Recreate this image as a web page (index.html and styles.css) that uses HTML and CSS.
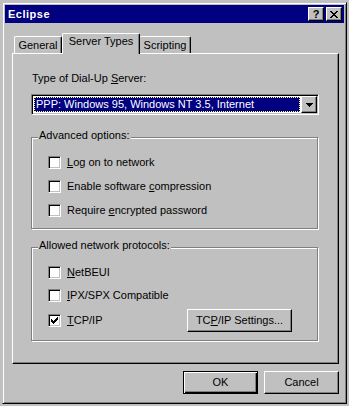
FILE: index.html
```html
<!DOCTYPE html>
<html>
    <head>
        <title>Eclipse</title>
        <link rel="stylesheet" href="styles.css">
    </head>
    <body>
        <div class="window">
            <div class="titlebar">
                <span class="title">Eclipse</span>
                <div class="caption-btns">
                    <span class="cap-btn cap-help">?</span>
                    <span class="cap-btn">
                        <svg width="8" height="7" viewBox="0 0 8 7" shape-rendering="crispEdges"><path d="M0 0h2v1H0zM6 0h2v1H6zM1 1h2v1H1zM5 1h2v1H5zM2 2h4v1H2zM3 3h2v1H3zM2 4h4v1H2zM1 5h2v1H1zM5 5h2v1H5zM0 6h2v1H0zM6 6h2v1H6z" fill="#000"/></svg>
                    </span>
                </div>
            </div>

            <div class="client">
                <div class="tabs">
                    <div class="tab tab-general">General</div>
                    <div class="tab tab-active">Server Types</div>
                    <div class="tab tab-scripting">Scripting</div>
                </div>

                <div class="panel">
                    <div class="field-label">Type of Dial-Up <u>S</u>erver:</div>
                    <div class="combo">
                        <div class="combo-value"><span class="combo-sel">PPP: Windows 95, Windows NT 3.5, Internet</span></div>
                        <div class="combo-btn">
                            <svg width="7" height="4" viewBox="0 0 7 4" shape-rendering="crispEdges"><path d="M0 0h7v1H0zM1 1h5v1H1zM2 2h3v1H2zM3 3h1v1H3z" fill="#000"/></svg>
                        </div>
                    </div>

                    <fieldset class="group group-adv">
                        <legend>Advanced options:</legend>
                        <div class="check-row"><span class="checkbox"></span><span class="check-text"><u>L</u>og on to network</span></div>
                        <div class="check-row"><span class="checkbox"></span><span class="check-text">Enable software <u>c</u>ompression</span></div>
                        <div class="check-row"><span class="checkbox"></span><span class="check-text">Require <u>e</u>ncrypted password</span></div>
                    </fieldset>

                    <fieldset class="group group-proto">
                        <legend>Allowed network protocols:</legend>
                        <div class="check-row"><span class="checkbox"></span><span class="check-text"><u>N</u>etBEUI</span></div>
                        <div class="check-row"><span class="checkbox"></span><span class="check-text"><u>I</u>PX/SPX Compatible</span></div>
                        <div class="check-row row-tcp">
                            <span class="checkbox">
                                <svg width="7" height="7" viewBox="0 0 7 7" shape-rendering="crispEdges"><path d="M6 0h1v1H6zM5 1h2v1H5zM0 2h1v1H0zM4 2h3v1H4zM0 3h2v1H0zM3 3h3v1H3zM0 4h5v1H0zM1 5h3v1H1zM2 6h1v1H2z" fill="#000"/></svg>
                            </span>
                            <span class="check-text"><u>T</u>CP/IP</span>
                            <button class="btn btn-settings">TC<u>P</u>/IP Settings...</button>
                        </div>
                    </fieldset>
                </div>

                <div class="buttons">
                    <button class="btn btn-default">OK</button>
                    <button class="btn">Cancel</button>
                </div>
            </div>
        </div>
    </body>
</html>
```

FILE: styles.css
```css
body{
    margin:0;
    background-color:#c0c0c0;
    font-family:"Liberation Sans", Arial, sans-serif;
    font-size:11px;
    line-height:13px;
    color:#000;
}

.window{
    box-sizing:border-box;
    width:345px;
    height:402px;
    margin:2px 0 0 2px;
    padding:2px;
    border:1px solid;
    border-color:#c0c0c0 #000 #000 #c0c0c0;
    box-shadow:inset 1px 1px #fff, inset -1px -1px #808080;
    background-color:#c0c0c0;
}

.titlebar{
    height:18px;
    display:flex;
    align-items:center;
    justify-content:space-between;
    background-color:#000080;
    color:#fff;
}

.title{
    font-weight:bold;
    padding-left:3px;
    letter-spacing:0.5px;
}

.caption-btns{
    display:flex;
    gap:2px;
    margin-right:2px;
}

.cap-btn{
    box-sizing:border-box;
    width:16px;
    height:14px;
    display:flex;
    align-items:center;
    justify-content:center;
    border:1px solid;
    border-color:#fff #000 #000 #fff;
    box-shadow:inset -1px -1px #808080;
    background-color:#c0c0c0;
    color:#000;
}

.cap-help{
    font-weight:bold;
    font-size:11px;
}

.client{
    padding:10px 0 0 7px;
}

.tabs{
    display:flex;
    align-items:flex-end;
    height:20px;
    padding-left:2px;
}

.tab{
    box-sizing:border-box;
    height:17px;
    padding-top:2px;
    text-align:center;
    border-top:1px solid #fff;
    border-left:1px solid #fff;
    border-right:1px solid #000;
    border-radius:2px 2px 0 0;
    box-shadow:inset -1px 0 #808080;
    background-color:#c0c0c0;
}

.tab-general{
    width:48px;
}

.tab-active{
    position:relative;
    z-index:1;
    width:78px;
    height:21px;
    padding-top:1px;
    margin-bottom:-1px;
}

.tab-scripting{
    width:51px;
    border-left:none;
}

.panel{
    box-sizing:border-box;
    width:327px;
    height:311px;
    padding:18px 19px 0 18px;
    border:1px solid;
    border-color:#fff #000 #000 #fff;
    box-shadow:inset -1px -1px #808080;
}

.field-label{
    padding-left:1px;
}

.combo{
    box-sizing:border-box;
    display:flex;
    height:21px;
    margin-top:9px;
    padding:1px;
    border:1px solid;
    border-color:#808080 #fff #fff #808080;
    box-shadow:inset 1px 1px #000, inset -1px -1px #c0c0c0;
    background-color:#fff;
}

.combo-value{
    flex:1;
    padding:1px;
    display:flex;
}

.combo-sel{
    flex:1;
    padding-left:1px;
    border:1px dotted #ffff80;
    background-color:#000080;
    color:#fff;
}

.combo-btn{
    box-sizing:border-box;
    width:16px;
    display:flex;
    align-items:center;
    justify-content:center;
    border:1px solid;
    border-color:#fff #000 #000 #fff;
    box-shadow:inset -1px -1px #808080;
    background-color:#c0c0c0;
}

.group{
    min-width:0;
    margin:14px 1px 0 0;
    padding:0 0 11px 16px;
    border:1px solid #808080;
    box-shadow:inset 1px 1px #fff, 1px 1px #fff;
}

.group legend{
    margin-left:-10px;
    padding:0 1px 4px;
    background-color:#c0c0c0;
}

.group-proto{
    margin-top:10px;
    padding-bottom:8px;
}

.check-row{
    display:flex;
    align-items:center;
    height:13px;
    margin-top:10px;
}

.group-adv .check-row + .check-row{
    margin-top:11px;
}

.row-tcp{
    height:23px;
    margin-top:7px;
}

.checkbox{
    box-sizing:border-box;
    width:13px;
    height:13px;
    display:flex;
    align-items:center;
    justify-content:center;
    border:1px solid;
    border-color:#808080 #fff #fff #808080;
    box-shadow:inset 1px 1px #000, inset -1px -1px #c0c0c0;
    background-color:#fff;
}

.check-text{
    margin-left:6px;
}

.btn{
    box-sizing:border-box;
    height:23px;
    padding:0;
    font:inherit;
    color:#000;
    border:1px solid;
    border-color:#fff #000 #000 #fff;
    box-shadow:inset -1px -1px #808080;
    background-color:#c0c0c0;
}

.btn-settings{
    width:105px;
    margin-left:auto;
    margin-right:25px;
}

.buttons{
    display:flex;
    justify-content:flex-end;
    gap:6px;
    margin-top:7px;
    padding-right:5px;
}

.buttons .btn{
    width:75px;
}

.btn-default{
    border-color:#000;
    box-shadow:inset 1px 1px #fff, inset -1px -1px #000, inset -2px -2px #808080;
}
```
